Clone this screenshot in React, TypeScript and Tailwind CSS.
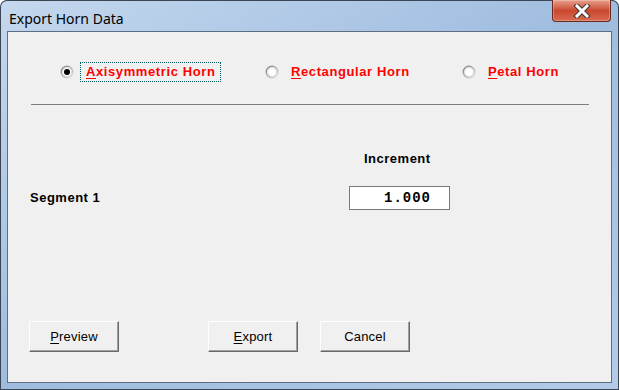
import React, { useState } from 'react';

const sans = { fontFamily: '"Liberation Sans", Arial, sans-serif' };

const Radio: React.FC<{ checked: boolean }> = ({ checked }) => (
  <svg width="14" height="14" viewBox="0 0 14 14" className="shrink-0">
    <defs>
      <linearGradient id="rg" x1="0" y1="0" x2="1" y2="1">
        <stop offset="0" stopColor="#7a7a7a" />
        <stop offset="1" stopColor="#e8e8e8" />
      </linearGradient>
    </defs>
    <circle cx="7" cy="7" r="6.5" fill="url(#rg)" />
    <circle cx="7" cy="7" r="5" fill="#ffffff" />
    <circle cx="7" cy="7" r="4.5" fill="none" stroke="#dcdcdc" strokeWidth="1" />
    {checked && <circle cx="7" cy="7" r="3" fill="#000000" />}
  </svg>
);

const RadioItem: React.FC<{
  label: string;
  checked: boolean;
  focused?: boolean;
  width: string;
  onClick: () => void;
}> = ({ label, checked, focused, width, onClick }) => (
  <div className={`flex items-center ${width}`} onClick={onClick}>
    <Radio checked={checked} />
    <span
      className={`ml-[6px] px-[5px] h-[20px] flex items-center border ${
        focused ? 'border-dotted border-[#006060]' : 'border-transparent'
      } text-[13px] font-bold tracking-[0.6px] text-[#ff0000]`}
      style={sans}
    >
      <span className="underline underline-offset-2">{label[0]}</span>
      {label.slice(1)}
    </span>
  </div>
);

const Button: React.FC<{ children: React.ReactNode; className?: string }> = ({ children, className }) => (
  <button
    className={`w-[90px] h-[31px] bg-[#f0f0f0] border border-t-[#ffffff] border-l-[#ffffff] border-b-[#696969] border-r-[#696969] shadow-[inset_-1px_-1px_0_#a0a0a0] text-[13px] tracking-[0.2px] text-black ${className ?? ''}`}
    style={sans}
  >
    {children}
  </button>
);

export default function App() {
  const [kind, setKind] = useState(0);

  return (
    <div className="w-[619px] h-[390px] flex flex-col px-[7px] pb-[7px] rounded-t-[7px] bg-gradient-to-br from-[#c4d8ee] via-[#9fbcdf] to-[#b3cbe7] shadow-[inset_0_0_0_1px_#3b4654]">
      <div className="h-[31px] flex items-start justify-between">
        <div
          className="mt-[8px] ml-[2px] text-[14px] text-black"
          style={{ fontFamily: '"Noto Sans", "Open Sans", sans-serif' }}
        >
          Export Horn Data
        </div>
        <div className="mr-[1px] w-[59px] h-[22px] rounded-b-[4px] border border-t-0 border-[#6b2a1f] bg-gradient-to-b from-[#e6a08e] via-[#c9482e] to-[#d86a50] shadow-[inset_0_0_0_1px_rgba(255,255,255,0.25)] flex items-center justify-center">
          <svg width="18" height="14" viewBox="0 0 18 14">
            <g strokeLinecap="square">
              <path d="M4 2 L14 12 M14 2 L4 12" stroke="#3d3535" strokeWidth="5" />
              <path d="M4 2 L14 12 M14 2 L4 12" stroke="#ffffff" strokeWidth="3" />
            </g>
          </svg>
        </div>
      </div>

      <div className="flex-1 flex flex-col bg-[#f0f0f0] border border-[#5e6e82]">
        <div className="mt-[30px] flex items-center pl-[52px]">
          <RadioItem label="Axisymmetric Horn" checked={kind === 0} focused={kind === 0} width="w-[205px]" onClick={() => setKind(0)} />
          <RadioItem label="Rectangular Horn" checked={kind === 1} focused={kind === 1} width="w-[197px]" onClick={() => setKind(1)} />
          <RadioItem label="Petal Horn" checked={kind === 2} focused={kind === 2} width="w-[120px]" onClick={() => setKind(2)} />
        </div>

        <div className="mt-[22px] ml-[23px] mr-[22px] border-t border-[#7d7d7d] h-px bg-white" />

        <div className="mt-[46px] ml-[356px] text-[13px] font-bold tracking-[0.5px] text-black leading-[16px]" style={sans}>
          Increment
        </div>

        <div className="mt-[19px] flex items-center pl-[22px]">
          <div className="w-[319px] text-[13px] font-bold tracking-[0.5px] text-black" style={sans}>
            Segment 1
          </div>
          <div
            className="w-[101px] h-[24px] bg-white border border-[#7a7a7a] flex items-center justify-end pr-[18px] text-[14px] font-bold tracking-[1px] text-black"
            style={{ fontFamily: '"Liberation Mono", "Courier New", monospace' }}
          >
            1.000
          </div>
        </div>

        <div className="mt-[111px] flex items-center pl-[21px]">
          <Button>
            <span className="underline underline-offset-2">P</span>review
          </Button>
          <Button className="ml-[89px]">
            <span className="underline underline-offset-2">E</span>xport
          </Button>
          <Button className="ml-[22px]">Cancel</Button>
        </div>
      </div>
    </div>
  );
}
